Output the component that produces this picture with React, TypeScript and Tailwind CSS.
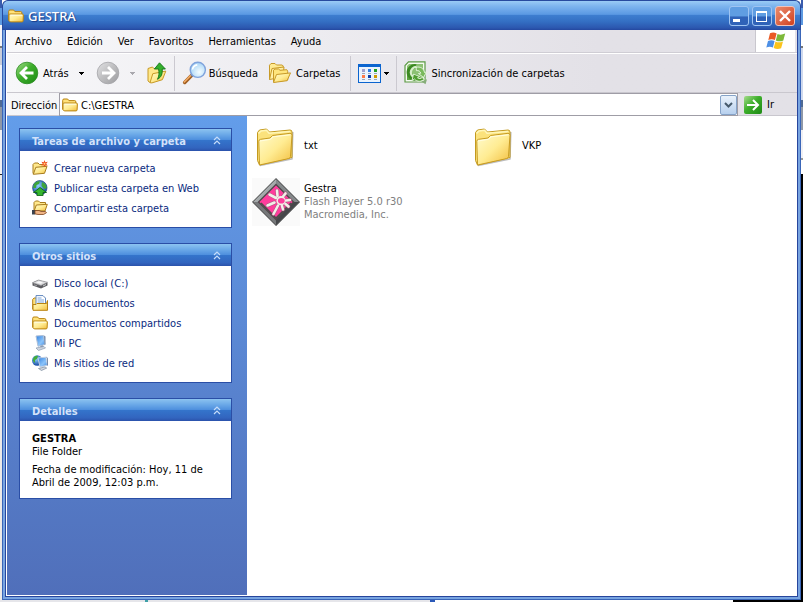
import type { ReactNode } from "react";

function Gradients() {
  return (
    <svg width="0" height="0" className="absolute" aria-hidden="true">
      <defs>
        <linearGradient id="folder" x1="0" y1="0" x2="1" y2="1">
          <stop offset="0" stopColor="#fffbcf" />
          <stop offset=".5" stopColor="#ffec93" />
          <stop offset="1" stopColor="#f2bd3c" />
        </linearGradient>
        <linearGradient id="green" x1="0" y1="0" x2="1" y2="1">
          <stop offset="0" stopColor="#a6dc8c" />
          <stop offset=".45" stopColor="#3dae2b" />
          <stop offset="1" stopColor="#1d8a14" />
        </linearGradient>
        <linearGradient id="grey" x1="0" y1="0" x2="1" y2="1">
          <stop offset="0" stopColor="#e2e2e4" />
          <stop offset=".5" stopColor="#bdbdbf" />
          <stop offset="1" stopColor="#9c9c9f" />
        </linearGradient>
        <radialGradient id="lens" cx=".6" cy=".65" r=".7">
          <stop offset="0" stopColor="#f4fdff" />
          <stop offset="1" stopColor="#9fd0f5" />
        </radialGradient>
        <linearGradient id="screen" x1="0" y1="0" x2="1" y2="1">
          <stop offset="0" stopColor="#2f7fe0" />
          <stop offset=".6" stopColor="#8cc4fa" />
          <stop offset="1" stopColor="#3b86e0" />
        </linearGradient>
        <radialGradient id="globe" cx=".4" cy=".35" r=".7">
          <stop offset="0" stopColor="#8fd0ff" />
          <stop offset="1" stopColor="#0d3f9c" />
        </radialGradient>
      </defs>
    </svg>
  );
}

function SmallFolder() {
  return (
    <svg width="16" height="16" viewBox="0 0 16 16" className="shrink-0">
      <path d="M.7 12.5V3.3Q.7 2 2 2h3.600l1.300 1.600h5.800q1.100 0 1.100 1.200V6" fill="#ffe27a" stroke="#b98310" />
      <path d="M2.800 13.900Q1.400 13.900 1 12.500V6.900q0-.9 1-.9h12.200q1.200 0 1.200 1.100l-.3 5.800q-.1 1-1.100 1z" fill="url(#folder)" stroke="#b98310" />
      <path d="M2.500 7.200h11.600" stroke="#fffde6" />
    </svg>
  );
}

function BackIcon({ disabled = false }: { disabled?: boolean }) {
  return (
    <svg width="24" height="24" viewBox="0 0 24 24">
      <circle cx="12" cy="12" r="10.8" fill={disabled ? "url(#grey)" : "url(#green)"} stroke={disabled ? "#a5a5a8" : "#2c8d23"} strokeWidth=".8" />
      <path d={disabled ? "M6 12h11M12 6l6 6-6 6" : "M18.500 12H7M12 6l-6 6 6 6"} fill="none" stroke="#fff" strokeWidth="2.800" />
    </svg>
  );
}

function UpIcon() {
  return (
    <svg width="20" height="22" viewBox="0 0 20 22">
      <path d="M1 19V6.500L5.500 5l1.500 1.700 8-1.200V16L3 20.500z" fill="#ffe88a" stroke="#c79a27" />
      <path d="m3 20.700 2.800-9 13-2.600-3.400 8.600-10.500 3.200z" fill="url(#folder)" stroke="#c79a27" />
      <path d="M12.500.8 18.400 7h-3.200c.4 4.800-.8 8.200-4.700 10.300 1.700-3.300 1.800-6.400 1.100-10.300H7.400z" fill="#35b02c" stroke="#13741a" strokeWidth=".9" />
    </svg>
  );
}

function SearchIcon() {
  return (
    <svg width="25" height="24" viewBox="0 0 25 24">
      <path d="M10.500 13.500 2.700 21.400" stroke="#a15f22" strokeWidth="3.600" strokeLinecap="round" />
      <path d="M9.700 13.500 2.300 21" stroke="#f4ad67" strokeWidth="1.600" strokeLinecap="round" />
      <path d="m11.500 12.500-2.300 2.400" stroke="#7a8090" strokeWidth="3" />
      <circle cx="15.800" cy="8.800" r="7.600" fill="url(#lens)" stroke="#7fa3dc" strokeWidth="1.400" />
      <path d="M10.500 8.500c.4-2.600 2.200-4.200 4.800-4.600" fill="none" stroke="#fff" strokeWidth="1.600" />
    </svg>
  );
}

function FoldersIcon() {
  return (
    <svg width="24" height="22" viewBox="0 0 24 22" stroke="#c89a28" strokeLinejoin="round">
      <path d="M1.500 17.500V3.200L3 1.500h4L8.500 3h5.700l1 1v5" fill="#ffeb93" />
      <path d="m1.500 17.500 2.500-11 12-1.500-1 10z" fill="#fff0a8" />
      <path d="M5.500 20V8.200L7 7h3.600l1.400 1.300 6.800-.6.900 1.500V18z" fill="#ffe57c" />
      <path d="m5.500 20.500 3-8 14-1.600-3.400 7.800z" fill="url(#folder)" />
    </svg>
  );
}

function ViewsIcon() {
  const dots = ["#a0a0cc", "#2f7be0", "#22a022", "#ff7a45", "#0e3fa8", "#d19a00"];
  return (
    <svg width="23" height="19" viewBox="0 0 23 19" shapeRendering="crispEdges">
      <rect width="23" height="19" fill="#0a64cf" />
      <rect x="1" y="3" width="21" height="15" fill="#eaf3fd" />
      {dots.map((c, i) => (
        <g key={c} transform={`translate(${4 + (i % 3) * 6} ${5 + Math.floor(i / 3) * 6})`}>
          <rect width="3" height="3" fill={c} />
          <rect y="4" width="3" height="1" fill="#9aa6b8" />
        </g>
      ))}
    </svg>
  );
}

function SyncIcon() {
  return (
    <svg width="24" height="24" viewBox="0 0 24 24">
      <path d="M4.500.8H21V21H1V4.500z" fill="#f4faf1" stroke="#5c9a45" strokeWidth="1.200" />
      <path d="M5 3h14v16H3V5z" fill="#8cc173" />
      <path d="M3 19v-7l9 1 7 6z" fill="#5ea441" />
      <path d="M12 5.500a6 6 0 1 0 1 11.500" fill="none" stroke="#3c8a22" strokeWidth="4.500" />
      <path d="M12.500 5.800a5.800 5.800 0 0 0-5.700 5.700 5 5 0 0 0 2 4" fill="none" stroke="#d5edc8" strokeWidth="2.200" />
      <path d="M12 6.500c4-1.500 8 1 8.500 5l2-.5-3 5.500-5-4 2.300-.3c-.6-2-2.300-3-4.300-2.500z" fill="#79b95c" stroke="#e9f6e2" strokeWidth=".9" />
      <path d="M20.500 18c-3 3-7.500 3-10 0L8 19.500 9.500 13l6 2.500-2 1.200c1.500 1.300 3.500 1 4.500-.2z" fill="#4f9d2f" stroke="#e9f6e2" strokeWidth=".9" />
      <path d="m17.500 20.500 4 2.700 1.500-5" fill="#86ad79" />
    </svg>
  );
}

function WindowsFlag() {
  return (
    <svg width="20" height="18" viewBox="0 0 20 18">
      <path d="M4 1.300C6.300 0 8.500.2 10.600 1.400L8.900 8C6.800 6.900 4.700 6.800 2.300 8z" fill="#ea5a25" />
      <path d="M11.500 1.900c2.200 1.200 4.400 1.100 7.700-.3l-1.900 6.800c-2.400 1.100-4.900 1.200-7.500 0z" fill="#7db93a" />
      <path d="M2 9c2.400-1.200 4.500-1.100 6.600 0L6.900 15.600c-2.200-1.200-4.300-1.100-6.600 0z" fill="#4c8fe6" />
      <path d="M9.500 9.500c2.400 1.200 4.900 1.100 7.500 0l-1.900 6.800c-2.400 1.100-4.900 1.100-7.400-.2z" fill="#fbc31c" />
    </svg>
  );
}

function NewFolderIcon() {
  return (
    <svg width="16" height="16" viewBox="0 0 16 16">
      <path d="M1 13.500V4.500L2.500 3H6l1.500 1.500H13V9" fill="#ffe88c" stroke="#a87c1c" />
      <path d="m1.300 14.300 2.500-7L15 6.300l-2.500 7z" fill="url(#folder)" stroke="#a87c1c" />
      <path d="m12.500 0 .8 2.200 2.500-.5-1.600 2 1.500 2-2.400-.4-.9 1.900-.8-2-2.400.3 1.500-1.800L9.400 1.800l2.300.4z" fill="#f0501e" />
      <circle cx="12.500" cy="3.700" r="1" fill="#ffd27a" />
    </svg>
  );
}

function PublishIcon() {
  return (
    <svg width="16" height="16" viewBox="0 0 16 16">
      <circle cx="7.800" cy="7.800" r="7.200" fill="url(#globe)" stroke="#123c7c" strokeWidth=".7" />
      <path d="M2 4c2-3 5-3 6-2.500L7 4 4.500 5 4 8 1 8zM10 2l3.500 2 1.300 4-2.300 1-3-3z" fill="#3ea63a" />
      <path d="m8 7.500 6.500 5H11V15.700H5v-3.200H1.500z" fill="#35b52f" stroke="#0f6415" strokeWidth=".9" />
    </svg>
  );
}

function ShareIcon() {
  return (
    <svg width="16" height="16" viewBox="0 0 16 16">
      <path d="M2 11V2.500L3.500 1H6.500L8 2.500h5.500V8" fill="#ffe88c" stroke="#a87c1c" />
      <path d="m2.300 10.500 2-5.500 11-.7L13 11z" fill="url(#folder)" stroke="#a87c1c" />
      <path d="M0 10h3v4.500H0z" fill="#39424f" />
      <path d="M3 10.500h4l2 1h4.500l1 1.200-3 1.800H6l-3-.6z" fill="#efb384" stroke="#7c4520" strokeWidth=".8" />
    </svg>
  );
}

function DiskIcon() {
  return (
    <svg width="16" height="16" viewBox="0 0 16 16">
      <path d="m.5 7.500 6-2.500 9 2.500v3l-6.500 3-8.500-3z" fill="#5c5c60" />
      <path d="m.5 7.700 6-2.700 9 2.300-6.500 3.200z" fill="#dcdcde" stroke="#8d8d90" strokeWidth=".6" />
      <path d="m4 7.500 3-1.200 4 1.200-2.500 1.300z" fill="#f8f8f8" />
      <path d="m11 11 3-1.500" stroke="#c9ccce" />
      <path d="m2 9.800 3 1" stroke="#a0a0a4" />
    </svg>
  );
}

function DocumentsIcon() {
  return (
    <svg width="16" height="16" viewBox="0 0 16 16">
      <path d="M.7 14V4.500L2 3h3v10z" fill="#ffe27a" stroke="#b98310" />
      <path d="M4 .6h7l2.500 2.500V12H4z" fill="#fff" stroke="#5f86bd" />
      <path d="M5.500 3h4M5.500 5h6.500M5.500 7h6.500" stroke="#7ba5dc" />
      <path d="M1 15.300V9.500h3l1-1h9.500l1-3v9.800z" fill="url(#folder)" stroke="#b98310" />
    </svg>
  );
}

function ComputerIcon() {
  return (
    <svg width="16" height="16" viewBox="0 0 16 16">
      <path d="m4 1 7.500-.5 1.500 9-7 1.800z" fill="url(#screen)" stroke="#aebfd6" />
      <path d="m12 .5 1.500 1v8l-1 .3z" fill="#7389ab" />
      <path d="m8 11 3-.7.5 2-2.500.6z" fill="#8ea0b8" />
      <path d="m4 13 8-1.500 1.500 1.500-7 2.500z" fill="#cfd5df" stroke="#7e8ea5" strokeWidth=".6" />
    </svg>
  );
}

function NetworkIcon() {
  return (
    <svg width="16" height="16" viewBox="0 0 16 16">
      <circle cx="5.200" cy="5.500" r="5.200" fill="url(#globe)" />
      <path d="M1 4c1-3 3-3.500 5-3L5 4 3 5v3L1 6z" fill="#42ad3b" />
      <path d="m6 3 8-.8 1.400 8L8 12z" fill="url(#screen)" stroke="#c3d0e2" />
      <path d="m14.500 2.300 1.200 1v7.200" fill="none" stroke="#5c7398" />
      <path d="m6.500 13.500 6.500-1.600 1.700 1.200-5.200 2.400z" fill="#cfd5df" stroke="#66788f" strokeWidth=".6" />
    </svg>
  );
}

function LargeFolder() {
  return (
    <svg width="48" height="48" viewBox="0 0 48 48">
      <path d="m8 43.500 32-6.500.8-27" fill="none" stroke="#8f8f8f" strokeWidth="1.500" opacity=".6" />
      <path d="M5.500 38.500V10.500l2-2.500 7-1 3 3 20.500-2q2 0 2 2V35.500L7.500 43z" fill="#fbe27c" stroke="#c39a20" />
      <path d="M6.500 11.500 9 9l5.500-.7 2.500 3 21-1.800" fill="none" stroke="#fff6b8" strokeWidth="1.500" />
      <path d="M7.500 43 6.800 19.300q0-1.800 1.800-2l9.400-1.300 2.500-2.500 17.500-2.200q2.200 0 2 2L38.500 34.500q-.1 1.700-1.800 2.100z" fill="url(#folder)" stroke="#c89c22" />
      <path d="m8 19 10.500-1.700 2.500-2.500 17.500-2" fill="none" stroke="#fffde0" />
    </svg>
  );
}

function FlashIcon() {
  const petals = "m24 20-6.500-3.500M25.500 18l-.5-5.500M31 18.500l2.500-3M34 22.500l4-.5M33.500 26l3 2.500M30 28l1 3.500M26 27.500 21.500 36M22.500 24.500 15.500 27.500";
  return (
    <svg width="48" height="48" viewBox="0 0 48 48">
      <rect width="48" height="48" fill="#fafafa" />
      <path d="M24 0v10L10 24H0z" fill="#a6aaac" />
      <path d="m24 0 24 24H38L24 10z" fill="#84888a" />
      <path d="M0 24h10l14 14v10z" fill="#76787a" />
      <path d="M48 24H38L24 38v10z" fill="#45474a" />
      <path d="M24 6.500 41.500 24 24 41.500 6.500 24z" fill="#ff3d9c" />
      <path d="M24 .7 47.300 24 24 47.300.7 24z" fill="none" stroke="#555" />
      <path d="M24 6.500 41.500 24 24 41.500 6.500 24z" fill="none" stroke="#4d4a4b" strokeWidth="1.300" />
      <path d="m9 25 15 15 15-15" fill="none" stroke="#4d4a4b" strokeWidth="1.500" />
      <g fill="none" strokeLinecap="round">
        <path d={petals} stroke="#a85a80" strokeWidth="3.600" />
        <path d={petals} stroke="#f3efe8" strokeWidth="2.600" />
      </g>
      <circle cx="29" cy="22.700" r="4.600" fill="#f3efe8" />
      <ellipse cx="29.300" cy="22.700" rx="3.400" ry="2.800" fill="#ff3d9c" />
    </svg>
  );
}

function Caret({ color = "#000" }: { color?: string }) {
  return (
    <svg width="5" height="3" viewBox="0 0 5 3" shapeRendering="crispEdges">
      <path d="M0 0h5v1H4v1H3v1H2V2H1V1H0z" fill={color} />
    </svg>
  );
}

function TitleBar() {
  const btn = "flex size-5 items-center justify-center rounded-[3px] border";
  const blue = " border-[#9fc4f2] bg-linear-to-b from-[#5f9de2] from-50% to-[#2f62b8] to-55%";
  return (
    <header className="flex h-[30px] items-center rounded-t-md border-x border-t border-[#274a9e] bg-[linear-gradient(#9acbf5_0%,#7db4ee_18%,#5b99e3_46%,#3d7dcf_50%,#3470c4_70%,#2c58b0_92%,#2448a0_100%)] px-[5px]">
      <SmallFolder />
      <h1 className="ml-1 flex-1 pt-0.5 font-['Noto_Sans',sans-serif] text-[13px] font-medium text-white [text-shadow:1px_1px_1px_#173a86]">GESTRA</h1>
      <div className="flex gap-[3px] pt-px">
        <button aria-label="Minimizar" className={btn + blue}>
          <svg width="18" height="18" shapeRendering="crispEdges"><path d="M3 12h7v3H3z" fill="#fff" /></svg>
        </button>
        <button aria-label="Maximizar" className={btn + blue}>
          <svg width="18" height="18" shapeRendering="crispEdges"><path d="M3 4h11v11H3zM4 6v8h9V6z" fill="#fff" fillRule="evenodd" /></svg>
        </button>
        <button aria-label="Cerrar" className={btn + " border-[#f0c3ba] bg-linear-to-br from-[#e98a6c] to-[#cf3f1c]"}>
          <svg width="18" height="18"><path d="m4 4 10 10M14 4 4 14" stroke="#fff" strokeWidth="2.400" /></svg>
        </button>
      </div>
    </header>
  );
}

function MenuBar() {
  return (
    <div className="flex h-[23px] border-b border-[#cfcdd4] bg-linear-to-r from-[#f8f8fa] to-[#e3e1e7] to-75%">
      <nav className="flex flex-1 items-center pt-0.5">
        {["Archivo", "Edición", "Ver", "Favoritos", "Herramientas", "Ayuda"].map((m) => (
          <button key={m} className="pr-[7px] pl-2 leading-4">{m}</button>
        ))}
      </nav>
      <div className="mr-0.5 flex w-10 items-center justify-center border-l border-[#c9c7ce] bg-white">
        <WindowsFlag />
      </div>
    </div>
  );
}

function ToolBar() {
  const sep = "h-[35px] w-px bg-[#cbc9d0]";
  return (
    <div className="flex h-10 items-center border-y border-t-white border-b-[#c9c7ce] bg-linear-to-r from-[#f7f7f9] to-[#e3e1e7] to-75% pl-2">
      <button className="flex items-center gap-1"><BackIcon />Atrás</button>
      <button aria-label="Más páginas atrás" className="ml-2 p-0.5"><Caret /></button>
      <button aria-label="Adelante" className="ml-2.5"><BackIcon disabled /></button>
      <button aria-label="Más páginas adelante" className="ml-2 p-0.5"><Caret color="#a9a8ae" /></button>
      <button aria-label="Arriba" className="ml-2.5"><UpIcon /></button>
      <div className={sep + " mx-[7px]"} />
      <button className="flex items-center gap-0.5"><SearchIcon />Búsqueda</button>
      <button className="ml-2.5 flex items-center gap-1"><FoldersIcon />Carpetas</button>
      <div className={sep + " mr-[7px] ml-2.5"} />
      <button aria-label="Vistas" className="flex items-center gap-[3px]"><ViewsIcon /><Caret /></button>
      <div className={sep + " mx-[7px]"} />
      <button className="flex items-center gap-[3px]"><SyncIcon />Sincronización de carpetas</button>
    </div>
  );
}

function AddressBar() {
  return (
    <div className="flex h-[23px] items-stretch border-b border-[#c9c7ce] bg-linear-to-r from-[#f7f7f9] to-[#e3e1e7] to-75% pl-1">
      <label htmlFor="address" className="w-12 self-center pt-0.5">Dirección</label>
      <div className="-mb-px flex flex-1 items-center border border-[#9f9da6] bg-white pl-0.5">
        <SmallFolder />
        <input id="address" defaultValue="C:\GESTRA" className="ml-[3px] min-w-0 flex-1 pt-0.5 outline-none" />
        <button aria-label="Direcciones recientes" className="flex h-5 w-[17px] items-center justify-center rounded-xs border border-[#86a3c8] bg-linear-to-b from-[#eaf2fb] to-[#b7d0ee]">
          <svg width="9" height="6"><path d="m1 1 3.500 3.500L8 1" fill="none" stroke="#465a6c" strokeWidth="2" /></svg>
        </button>
      </div>
      <button className="mr-[23px] ml-1.5 flex items-center gap-[5px] pt-px">
        <svg width="18" height="18" viewBox="0 0 18 18">
          <rect width="18" height="18" rx="2" fill="url(#green)" />
          <path d="M3 9h11M9 4l5 5-5 5" fill="none" stroke="#fff" strokeWidth="2" />
        </svg>
        Ir
      </button>
    </div>
  );
}

function Panel({ title, children }: { title: string; children: ReactNode }) {
  return (
    <section className="border border-[#2a4ea6] bg-white">
      <h2>
        <button className="flex h-[22px] w-full items-center justify-between bg-[linear-gradient(#8cc3f0_0%,#6ba9e8_25%,#4f90de_48%,#3474cb_52%,#3265bf_85%,#2b52ab_100%)] pr-2.5 pl-3 text-[11px] font-bold text-[#d3e2fa]">
          <span className="pt-[3px]">{title}</span>
          <svg width="8" height="9" viewBox="0 0 8 9" fill="none" stroke="#c5dcfa" strokeWidth="1.200">
            <path d="m1 4 3-3 3 3M1 8l3-3 3 3" />
          </svg>
        </button>
      </h2>
      {children}
    </section>
  );
}

type Link = [string, ReactNode];

function LinkList({ items }: { items: Link[] }) {
  return (
    <ul className="pt-[7px] pb-[9px] pl-3">
      {items.map(([label, icon]) => (
        <li key={label} className="h-5">
          <a href="#" className="flex h-5 items-center gap-1.5 text-[#0a2a80]">{icon}{label}</a>
        </li>
      ))}
    </ul>
  );
}

const tasks: Link[] = [
  ["Crear nueva carpeta", <NewFolderIcon />],
  ["Publicar esta carpeta en Web", <PublishIcon />],
  ["Compartir esta carpeta", <ShareIcon />],
];

const places: Link[] = [
  ["Disco local (C:)", <DiskIcon />],
  ["Mis documentos", <DocumentsIcon />],
  ["Documentos compartidos", <SmallFolder />],
  ["Mi PC", <ComputerIcon />],
  ["Mis sitios de red", <NetworkIcon />],
];

function SideBar() {
  return (
    <aside className="flex w-60 shrink-0 flex-col gap-[15px] bg-linear-to-b from-[#639dea] to-[#506fba] px-3 pt-3 pr-[15px]">
      <Panel title="Tareas de archivo y carpeta"><LinkList items={tasks} /></Panel>
      <Panel title="Otros sitios"><LinkList items={places} /></Panel>
      <Panel title="Detalles">
        <div className="px-3 pt-[11px] pb-[9px]">
          <p className="font-bold">GESTRA</p>
          <p>File Folder</p>
          <p className="mt-[5px]">Fecha de modificación: Hoy, 11 de Abril de 2009, 12:03 p.m.</p>
        </div>
      </Panel>
    </aside>
  );
}

function Item({ icon, name, info = [] }: { icon: ReactNode; name: string; info?: string[] }) {
  return (
    <li className="flex items-center gap-1">
      {icon}
      <div className="pb-0.5">
        <p>{name}</p>
        {info.map((t) => <p key={t} className="text-[#808080]">{t}</p>)}
      </div>
    </li>
  );
}

export default function App() {
  return (
    <div className="grid min-h-screen grid-cols-[2px_1fr_2px] grid-rows-[1fr_2px] font-['DejaVu_Sans_Condensed','DejaVu_Sans',sans-serif] text-[11px] leading-[13px] text-black">
      <Gradients />
      <div className="bg-[linear-gradient(#3a5cae_0_8px,#5d9ae2_8px_25px,#f4f4f8_25px_46px,#777_46px_48px,#c9cdda_48px_65px,#eef0f8_65px_100px,#4f6a94_100px_107px,#8f98a8_107px_130px,#f0f0f4_130px_174px,#222_174px_175px,#ece9e8_175px)]" />
      <div className="flex flex-col rounded-t-lg bg-[#3c62b4]">
        <TitleBar />
        <div className="flex flex-1 flex-col border-x border-b border-[#3a66b8]">
          <div className="flex flex-1 flex-col border-x-2 border-b-2 border-[#78a4e0]">
            <div className="flex flex-1 flex-col border-x border-b border-[#27459c]">
              <div className="flex flex-1 flex-col border-b border-l border-white">
                <MenuBar />
                <ToolBar />
                <AddressBar />
                <div className="flex flex-1">
                  <SideBar />
                  <main className="flex-1 bg-white pt-1.5 pl-[5px]">
                    <ul className="grid grid-cols-[repeat(auto-fill,218px)] gap-y-2">
                      <Item icon={<LargeFolder />} name="txt" />
                      <Item icon={<LargeFolder />} name="VKP" />
                      <Item icon={<FlashIcon />} name="Gestra" info={["Flash Player 5.0 r30", "Macromedia, Inc."]} />
                    </ul>
                  </main>
                </div>
              </div>
            </div>
          </div>
        </div>
      </div>
      <div className="bg-[linear-gradient(#3a5cae_0_8px,#5d9ae2_8px_25px,#fff_25px_46px,#777_46px_48px,#cfd9ee_48px_100px,#4f6a94_100px_107px,#8f98a8_107px_130px,#f0f0f4_130px_158px,#999_158px_160px,#fff_160px_174px,#000_174px)]" />
      <div className="col-span-3 bg-[linear-gradient(90deg,#e6e6ea_0_145px,#3fa0a8_145px_148px,#e6e6ea_148px_430px,#2b59b8_430px_435px,#fff_435px_733px,#000_733px)]" />
    </div>
  );
}
